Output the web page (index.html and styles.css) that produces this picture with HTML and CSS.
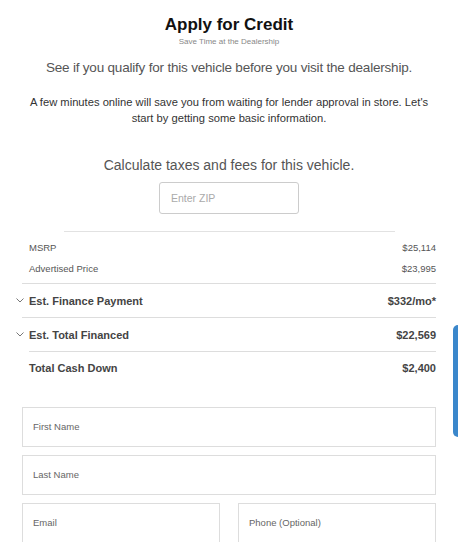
FILE: index.html
```html
<!DOCTYPE html>
<html>
<head>
<meta charset="utf-8">
<link rel="stylesheet" href="styles.css">
</head>
<body>
<div class="page">
  <h1 class="title">Apply for Credit</h1>
  <div class="subtitle">Save Time at the Dealership</div>
  <p class="lead">See if you qualify for this vehicle before you visit the dealership.</p>
  <p class="intro">A few minutes online will save you from waiting for lender approval in store. Let's start by getting some basic information.</p>
  <p class="calc">Calculate taxes and fees for this vehicle.</p>
  <div class="zip-wrap"><div class="zip">Enter ZIP</div></div>
  <div class="divider"></div>
  <div class="prices">
    <div class="small-row"><span>MSRP</span><span>$25,114</span></div>
    <div class="small-row"><span>Advertised Price</span><span>$23,995</span></div>
  </div>
  <div class="big-row has-line">
    <svg class="chev" width="8" height="5" viewBox="0 0 8 5"><path d="M0.5 0.5 L4 4 L7.5 0.5" fill="none" stroke="#777" stroke-width="1"/></svg>
    <span class="label">Est. Finance Payment</span><span class="val">$332/mo*</span>
  </div>
  <div class="big-row">
    <svg class="chev" width="8" height="5" viewBox="0 0 8 5"><path d="M0.5 0.5 L4 4 L7.5 0.5" fill="none" stroke="#777" stroke-width="1"/></svg>
    <span class="label">Est. Total Financed</span><span class="val">$22,569</span>
  </div>
  <div class="big-row top-line">
    <span class="label">Total Cash Down</span><span class="val">$2,400</span>
  </div>
  <div class="form">
    <div class="field full">First Name</div>
    <div class="field full">Last Name</div>
    <div class="field">Email</div>
    <div class="field">Phone (Optional)</div>
  </div>
</div>
<div class="tab"></div>
</body>
</html>
```
FILE: styles.css
```css
html, body { margin: 0; padding: 0; background: #fff; }
body { font-family: "Liberation Sans", Arial, sans-serif; overflow: hidden; height: 542px; }
.page { padding-top: 15px; }
.title { margin: 0; font-size: 17px; line-height: 20px; font-weight: bold; text-align: center; color: #111; }
.subtitle { margin-top: 2px; font-size: 8px; line-height: 10px; text-align: center; color: #888; }
.lead { margin: 12px 0 0; font-size: 13.5px; letter-spacing: -0.2px; line-height: 18px; text-align: center; color: #555; }
.intro { margin: 17px auto 0; max-width: 406px; font-size: 11.2px; line-height: 16px; text-align: center; color: #333; }
.calc { margin: 30px 0 0; font-size: 14px; line-height: 18px; text-align: center; color: #555; }
.zip-wrap { display: flex; justify-content: center; margin-top: 8px; }
.zip { box-sizing: border-box; width: 140px; height: 32px; border: 1px solid #ccc; border-radius: 3px; padding-left: 11px; font-size: 10.5px; line-height: 30px; color: #aaa; }
.divider { margin: 17px 0 0 64px; width: 331px; height: 1px; background: #e2e2e2; }
.prices { margin: 0 22px; padding: 5px 0 4px 7px; border-bottom: 1px solid #ddd; }
.small-row { display: flex; justify-content: space-between; height: 21px; align-items: center; font-size: 9.5px; color: #555; }
.big-row { display: flex; align-items: center; height: 33px; margin: 0 22px 0 16px; font-size: 11px; font-weight: bold; color: #444; }
.big-row.has-line { border-bottom: 1px solid #ddd; margin-left: 22px; }
.big-row.has-line .chev { margin-left: -6px; }
.big-row.top-line { border-top: 1px solid #ddd; margin-left: 29px; height: 32px; }
.chev { margin-right: 5px; flex: none; }
.big-row .label { flex: 1; }
.form { display: grid; grid-template-columns: 1fr 1fr; column-gap: 18px; row-gap: 8px; margin: 23px 22px 0; }
.field { box-sizing: border-box; height: 40px; border: 1px solid #ddd; padding-left: 10px; font-size: 9.5px; line-height: 38px; color: #666; }
.field.full { grid-column: 1 / 3; }
.tab { position: absolute; right: 0; top: 325px; width: 5px; height: 112px; background: #3b87cb; border-radius: 8px 0 0 8px; }
```
